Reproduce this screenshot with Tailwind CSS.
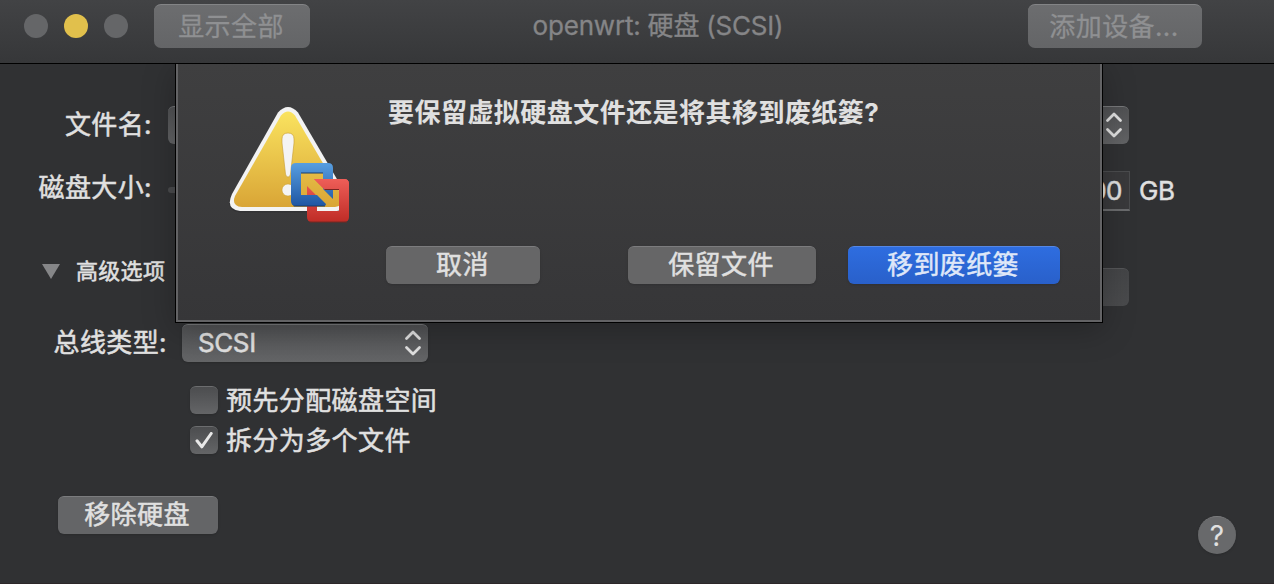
<!DOCTYPE html>
<html lang="zh-CN">
<head>
<meta charset="utf-8">
<title>openwrt: 硬盘 (SCSI)</title>
<script src="https://cdn.jsdelivr.net/npm/@tailwindcss/browser@4"></script>
</head>
<body class="relative h-[584px] w-[1274px] overflow-hidden bg-[#303133] font-[Inter,'Noto_Sans_CJK_SC',sans-serif] text-[26px] leading-[38px] tracking-[0.4px] text-[#e0e0e0] whitespace-nowrap">
  <header class="relative z-10 flex h-16 items-start border-b border-black bg-linear-to-b from-[#424345] to-[#363739] text-[#858587] [-webkit-text-stroke:0.3px]">
    <div class="flex h-[52px] w-[154px] items-center gap-4 pl-6">
      <span class="size-6 rounded-full bg-[#656668]"></span>
      <span class="size-6 rounded-full bg-[#e1c04c]"></span>
      <span class="size-6 rounded-full bg-[#656668]"></span>
    </div>
    <button class="mt-1 h-11 w-[156px] rounded-[7px] border-t border-[#838486] bg-linear-to-b from-[#6c6d6f] to-[#646567] pr-0.5 leading-[42px] tracking-[0.4px] text-[#8f9092]">显示全部</button>
    <h1 class="ml-[222px] mt-[7px] w-[252px] text-center tracking-[-0.2px]">openwrt: 硬盘 (SCSI)</h1>
    <button class="ml-[244px] mt-1 h-11 w-[174px] rounded-[7px] border-t border-[#838486] bg-linear-to-b from-[#6c6d6f] to-[#646567] pr-0.5 leading-[42px] tracking-[0.4px] text-[#8f9092]">添加设备...</button>
  </header>

  <main class="h-[520px] border-b border-[#2c2729] pt-[42px] [-webkit-text-stroke:0.5px_#e0e0e0]">
    <div class="flex h-[38px]">
      <label class="w-[152px] text-right">文件名:</label>
      <div class="ml-4 flex h-[38px] w-[961px] items-center justify-end rounded-[6px] border-t border-[#77787a] bg-linear-to-b from-[#505153] to-[#626365] pb-px pr-1.5">
        <svg class="h-[26px] w-[18px]" viewBox="0 0 18 26" fill="none" stroke="#e0e0e0" stroke-width="2.800" stroke-linecap="round" stroke-linejoin="round"><path d="M2.500 8.500 9 2l6.500 6.500M2.500 17.500 9 24l6.500-6.500"/></svg>
      </div>
    </div>
    <div class="mt-6 flex h-[43px]">
      <label class="w-[152px] pt-px text-right">磁盘大小:</label>
      <div class="ml-4 mt-[19px] h-1.5 w-[800px] rounded-full bg-[#4a4b4d]"></div>
      <div class="ml-[62px] mt-[3px] h-10 w-[100px] border border-b-2 border-[#4b4c4e] border-b-[#6a6b6d] bg-[#39393b] pr-[7px] text-right tracking-[-0.5px]">100.00</div>
      <span class="ml-[9px] mt-1 tracking-[-0.5px]">GB</span>
    </div>
    <div class="mt-[41px] flex h-[54px]">
      <svg class="ml-[42px] mt-[12px] h-[15px] w-[18px]" viewBox="0 0 18 15"><path d="M0 0h18L9 15z" fill="#858688"/></svg>
      <span class="ml-4 text-[22px] tracking-[0.3px]">高级选项</span>
      <div class="ml-auto mr-[145px] mt-4 h-[38px] w-[880px] rounded-[6px] border-t border-[#555658] bg-linear-to-b from-[#444547] to-[#4a4b4d]"></div>
    </div>
    <div class="mt-[18px] flex h-[38px]">
      <label class="w-[167px] text-right">总线类型:</label>
      <div class="ml-[15px] flex h-[38px] w-[246px] items-center justify-between rounded-[6px] border-t border-[#77787a] bg-linear-to-b from-[#515254] to-[#646567] pb-0.5 pl-4 pr-1.5 shadow-sm">
        <span class="tracking-[-0.4px]">SCSI</span>
        <svg class="h-[26px] w-[18px]" viewBox="0 0 18 26" fill="none" stroke="#e0e0e0" stroke-width="2.800" stroke-linecap="round" stroke-linejoin="round"><path d="M2.500 8.500 9 2l6.500 6.500M2.500 17.500 9 24l6.500-6.500"/></svg>
      </div>
    </div>
    <div class="ml-[190px] mt-[18px] flex h-10 items-center gap-2">
      <span class="size-7 rounded-[6px] border-t border-[#6c6d6f] bg-linear-to-b from-[#4c4d4f] to-[#646567] shadow-sm"></span>
      <span class="pt-0.5">预先分配磁盘空间</span>
    </div>
    <div class="ml-[190px] flex h-10 items-center gap-2">
      <span class="grid size-7 place-items-center rounded-[6px] border-t border-[#6c6d6f] bg-linear-to-b from-[#4c4d4f] to-[#646567] shadow-sm">
        <svg class="h-[18px] w-[18px]" viewBox="0 0 18 18" fill="none" stroke="#e8e8e8" stroke-width="3" stroke-linecap="round" stroke-linejoin="round"><path d="m2 8.800 4.800 6L16.200 1.500"/></svg>
      </span>
      <span class="pt-0.5">拆分为多个文件</span>
    </div>
    <div class="ml-[58px] mr-[38px] mt-[33px] flex items-start justify-between">
      <button class="mt-[3px] h-[38px] w-40 rounded-[6px] border-t border-[#7b7c7e] bg-[#646567] pb-0.5 pr-0.5 leading-[35px] tracking-[0.4px] shadow-sm">移除硬盘</button>
      <button class="mt-[23px] size-[38px] rounded-full border-t border-[#7b7c7e] bg-[#68696b] text-[28px] leading-9 shadow-sm [-webkit-text-stroke:0]">?</button>
    </div>
  </main>

  <section class="absolute left-[175px] top-16 flex h-[259px] w-[928px] border border-t-0 border-black bg-linear-to-b from-[#3f3f40] to-[#363638] shadow-[0_6px_30px_rgba(0,0,0,0.25)]">
    <div class="flex w-full border-2 border-t-0 border-[#636365] pl-[42px] pt-[34px]">
      <svg class="h-[135px] w-[150px] shrink-0" viewBox="0 -2 150 135">
        <defs>
          <linearGradient id="gold" x2="0" y2="1"><stop stop-color="#fae35f"/><stop offset="1" stop-color="#d9a536"/></linearGradient>
          <linearGradient id="blue" gradientUnits="userSpaceOnUse" x1="0" y1="63" x2="0" y2="106"><stop stop-color="#579ee0"/><stop offset="1" stop-color="#1f56a3"/></linearGradient>
          <linearGradient id="red" gradientUnits="userSpaceOnUse" x1="0" y1="79" x2="0" y2="122"><stop stop-color="#ee5e58"/><stop offset="1" stop-color="#bf2c26"/></linearGradient>
        </defs>
        <path d="M58 13Q68 1 78 13L124 92Q132 112 117 112.500H20Q4 111 12 94Z" fill="#29292b" opacity=".4"/>
        <path d="M58 12.500Q68 1.500 78 12.500L124.500 92Q132 110 117 111H20Q5 109 12 94Z" fill="#f3f3f3"/>
        <path d="M61 15.500Q68 7.500 75 15.500L121 94Q125 106 115 107H22Q11 106 15 96Z" fill="url(#gold)"/>
        <path d="M62 39Q62 33 68 33T74 39V43L70.500 74Q70 77 68 77T65.500 74L62 43Z" fill="#f4f4f4" stroke="#c69c34" stroke-width=".6"/>
        <circle cx="68" cy="90" r="6" fill="#f4f4f4" stroke="#c69c34" stroke-width=".5"/>
        <path d="M94 79H124Q129 79 129 84V117Q129 122 124 122H92Q87 122 87 117V86L97 96V111H119V90H105Z" fill="url(#red)"/>
        <path d="M76 63H108Q113 63 113 68V99L103 89V73H81V95H97L106 104Q106 106 104 106H76Q71 106 71 101V68Q71 63 76 63Z" fill="url(#blue)"/>
        <path d="M81 72.500H103V73.500H81ZM73 105.500H105V106.500H74Z" fill="#193d6c"/>
        <path d="M94 79H124Q129 79 129 84V117H119V90H105Z" fill="url(#red)"/>
        <path d="M104 89H119V90H105ZM89 121.500H127V122.500H90Z" fill="#782620"/>
      </svg>
      <div class="ml-[18px] mt-[-4px]">
        <h2 class="font-bold leading-[38px] tracking-[0.46px]">要保留虚拟硬盘文件还是将其移到废纸篓?</h2>
        <div class="ml-[-2px] mt-[114px] flex [-webkit-text-stroke:0.5px]">
          <button class="h-[38px] w-[154px] rounded-[6px] border-t border-[#7c7c7e] bg-[#666667] pb-0.5 pr-px leading-[35px] tracking-[0.4px] shadow-sm">取消</button>
          <button class="ml-[88px] h-[38px] w-[188px] rounded-[6px] border-t border-[#7c7c7e] bg-[#666667] pb-0.5 pr-0.5 leading-[35px] tracking-[0.4px] shadow-sm">保留文件</button>
          <button class="ml-8 h-[38px] w-[212px] rounded-[6px] border-t border-[#5587e5] bg-linear-to-b from-[#2e6de0] to-[#2960ca] pb-0.5 pr-0.5 leading-[35px] tracking-[0.4px] text-[#dfe7f8] shadow-sm">移到废纸篓</button>
        </div>
      </div>
    </div>
  </section>
</body>
</html>
